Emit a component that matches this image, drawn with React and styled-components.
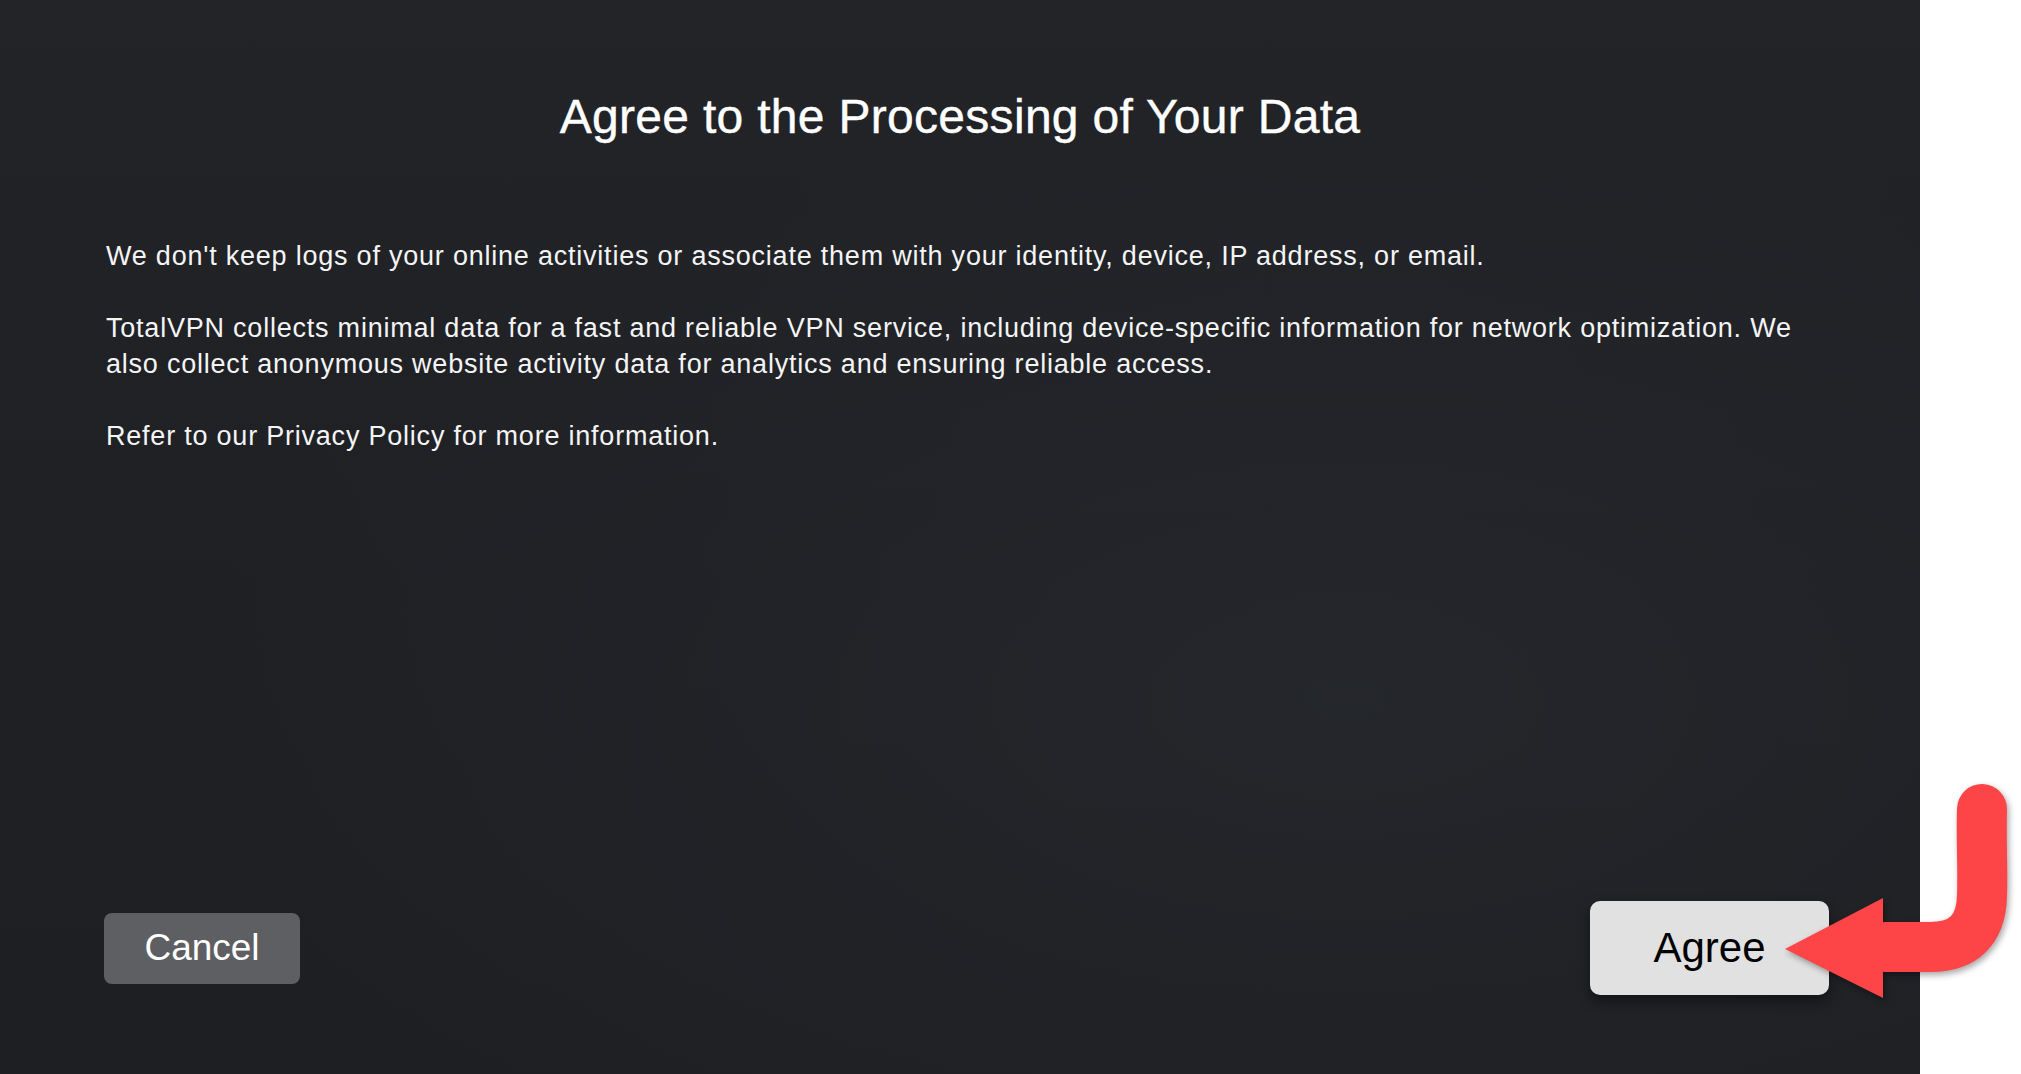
import React from 'react';
import styled, { createGlobalStyle } from 'styled-components';

const GlobalStyle = createGlobalStyle`
  html, body {
    margin: 0;
    padding: 0;
    background: #ffffff;
  }
  body {
    font-family: 'Liberation Sans', Arial, sans-serif;
  }
`;

const Page = styled.div`
  position: relative;
  display: flex;
  width: 2021px;
  height: 1074px;
  overflow: hidden;
  background: #ffffff;
`;

const Panel = styled.div`
  display: flex;
  flex-direction: column;
  width: 1920px;
  height: 1074px;
  box-sizing: border-box;
  padding: 88px 0 79px;
  background:
    radial-gradient(ellipse at 70% 65%, rgba(40, 43, 48, 0.6) 0%, rgba(30, 31, 35, 0) 60%),
    linear-gradient(180deg, #222428 0%, #1f2024 55%, #1e1f22 100%);
  color: #ffffff;
`;

const Title = styled.h1`
  margin: 0;
  font-size: 48px;
  line-height: 58px;
  font-weight: 400;
  letter-spacing: 0.3px;
  text-align: center;
  color: #ffffff;
  -webkit-text-stroke: 0.4px #ffffff;
`;

const Body = styled.div`
  display: flex;
  flex-direction: column;
  gap: 36px;
  margin-top: 92px;
  padding: 0 106px;
`;

const Paragraph = styled.p`
  margin: 0;
  font-size: 27px;
  line-height: 36px;
  letter-spacing: 0.78px;
  color: #f4f4f5;
`;

const Footer = styled.div`
  display: flex;
  align-items: center;
  justify-content: space-between;
  margin-top: auto;
  padding: 0 91px 0 104px;
`;

const Button = styled.button`
  display: flex;
  align-items: center;
  justify-content: center;
  border: none;
  font-family: 'Liberation Sans', Arial, sans-serif;
  cursor: pointer;
  width: ${(props) => (props.focused ? '239px' : '196px')};
  height: ${(props) => (props.focused ? '94px' : '71px')};
  border-radius: ${(props) => (props.focused ? '10px' : '8px')};
  font-size: ${(props) => (props.focused ? '42px' : '37px')};
  background: ${(props) => (props.focused ? '#e1e1e2' : '#5e5f62')};
  color: ${(props) => (props.focused ? '#000000' : '#ffffff')};
  box-shadow: ${(props) => (props.focused ? '0 6px 14px rgba(0, 0, 0, 0.45)' : 'none')};
`;

const Arrow = styled.svg`
  position: absolute;
  left: 1760px;
  top: 770px;
  width: 261px;
  height: 240px;
  filter: drop-shadow(2px 3px 3px rgba(0, 0, 0, 0.35));
`;

function App() {
  return (
    <Page>
      <GlobalStyle />
      <Panel>
        <Title>Agree to the Processing of Your Data</Title>
        <Body>
          <Paragraph>
            We don&apos;t keep logs of your online activities or associate them with your identity, device, IP address, or email.
          </Paragraph>
          <Paragraph>
            TotalVPN collects minimal data for a fast and reliable VPN service, including device-specific information for network optimization. We also collect anonymous website activity data for analytics and ensuring reliable access.
          </Paragraph>
          <Paragraph>Refer to our Privacy Policy for more information.</Paragraph>
        </Body>
        <Footer>
          <Button>Cancel</Button>
          <Button focused>Agree</Button>
        </Footer>
      </Panel>
      <Arrow viewBox="0 0 261 240">
        <path
          d="M222 39 C221 70 223 100 222 125 Q221 177 170 177 L125 177"
          fill="none"
          stroke="#fd4446"
          strokeWidth="50"
          strokeLinecap="round"
        />
        <polygon points="123,128 123,228 25,179" fill="#fd4446" />
      </Arrow>
    </Page>
  );
}

export default App;
